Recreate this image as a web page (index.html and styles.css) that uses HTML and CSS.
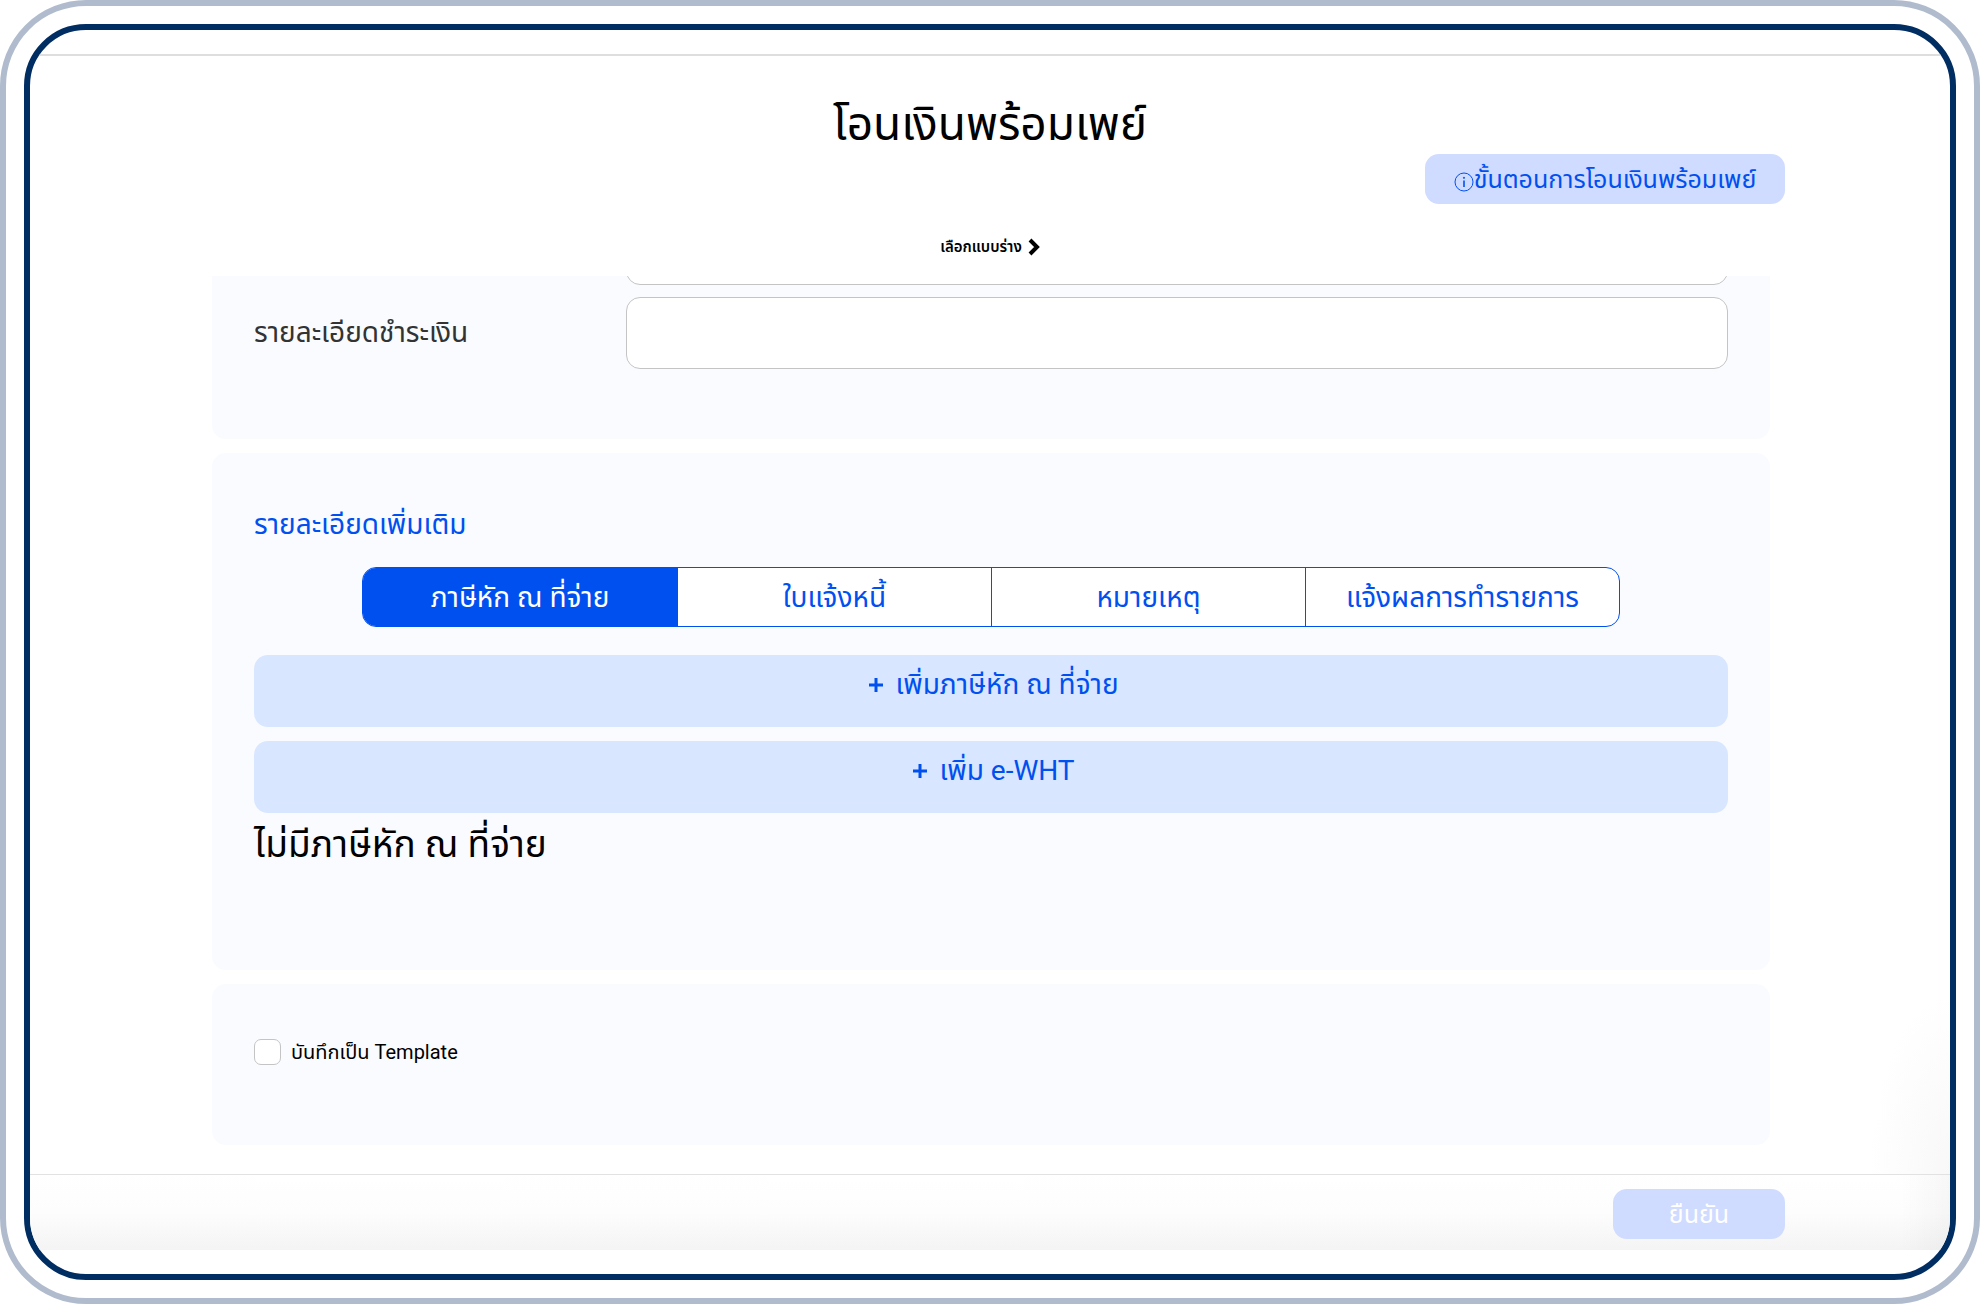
FILE: index.html
```html
<!DOCTYPE html>
<html lang="th">
<head>
	<meta charset="UTF-8">
	<title>โอนเงินพร้อมเพย์</title>
	<link rel="stylesheet" href="styles.css">
</head>

<body>
	<div class="frame">
		<div class="screen">
			<header class="header">
				<h1>โอนเงินพร้อมเพย์</h1>
				<div class="help-row">
					<button type="button" class="btn help">
						<svg class="icon-info" viewBox="0 0 20 20" fill="none" stroke="currentColor">
							<circle cx="10" cy="10" r="9" />
							<path d="M10 8.5v6.5" stroke-width="1.6" />
							<circle cx="10" cy="5.8" r=".6" fill="currentColor" />
						</svg>ขั้นตอนการโอนเงินพร้อมเพย์
					</button>
				</div>
				<button type="button" class="draft">
					เลือกแบบร่าง
					<svg class="icon-chevron" viewBox="0 0 12 18" fill="none" stroke="currentColor" stroke-width="4">
						<path d="M2 2l7 7-7 7" />
					</svg>
				</button>
			</header>

			<main class="content">
				<section class="card">
					<div class="field">
						<span></span>
						<input type="text" class="input" aria-label="หมายเลข">
					</div>
					<div class="field">
						<label for="detail">รายละเอียดชำระเงิน</label>
						<input type="text" class="input" id="detail">
					</div>
				</section>

				<section class="card more">
					<h2>รายละเอียดเพิ่มเติม</h2>
					<div class="tabs">
						<button type="button" class="tab active">ภาษีหัก ณ ที่จ่าย</button>
						<button type="button" class="tab">ใบแจ้งหนี้</button>
						<button type="button" class="tab">หมายเหตุ</button>
						<button type="button" class="tab">แจ้งผลการทำรายการ</button>
					</div>
					<button type="button" class="add">
						<svg class="icon-plus" viewBox="0 0 14 14" stroke="currentColor" stroke-width="3"><path d="M7 0v14M0 7h14" /></svg>
						เพิ่มภาษีหัก ณ ที่จ่าย
					</button>
					<button type="button" class="add">
						<svg class="icon-plus" viewBox="0 0 14 14" stroke="currentColor" stroke-width="3"><path d="M7 0v14M0 7h14" /></svg>
						เพิ่ม e-WHT
					</button>
					<p class="empty">ไม่มีภาษีหัก ณ ที่จ่าย</p>
				</section>

				<section class="card save">
					<input type="checkbox" class="checkbox" id="template">
					<label for="template">บันทึกเป็น Template</label>
				</section>
			</main>

			<footer class="footer">
				<button type="button" class="btn confirm">ยืนยัน</button>
			</footer>
		</div>
	</div>
</body>

</html>
```
FILE: styles.css
```css
* {
	box-sizing: border-box;
}
body {
	margin: 0;
	background: #fff;
	font-family: "Roboto", "Noto Sans Thai", "Liberation Sans", sans-serif;
	color: #000;
}
h1, h2, p {
	margin: 0;
	font-weight: 400;
}
button {
	padding: 0;
	border: 0;
	font: inherit;
	cursor: pointer;
}

/*外框*/
.frame {
	height: 100vh;
	padding: 18px;
	border: 6px solid #b0bccd;
	border-radius: 86px;
}
.screen {
	display: flex;
	flex-direction: column;
	height: 100%;
	padding: 24px 0;
	overflow: hidden;
	border: 6px solid #002d62;
	border-radius: 62px;
}

/*header*/
.header {
	display: flex;
	flex-direction: column;
	height: 222px;
	padding-top: 38px;
	border-top: 2px solid #dedede;
}
h1 {
	font-size: 46px;
	line-height: 60px;
	text-align: center;
}
.help-row {
	display: flex;
	justify-content: flex-end;
	padding-right: 165px;
}
.btn {
	height: 50px;
	border-radius: 14px;
	background: #cfdbff;
	font-size: 25px;
	line-height: 32px;
}
.help {
	display: flex;
	align-items: center;
	justify-content: center;
	width: 360px;
	padding-top: 2px;
	color: #0050f0;
}
.icon-info {
	width: 20px;
	height: 20px;
	margin-top: 4px;
}
.draft {
	display: flex;
	align-items: center;
	align-self: center;
	gap: 6px;
	margin-top: 31px;
	background: none;
	font-size: 15px;
	line-height: 24px;
	font-weight: 600;
}
.icon-chevron {
	width: 12px;
	height: 18px;
}

/*cards*/
.content {
	display: flex;
	flex: 1;
	flex-direction: column;
	justify-content: flex-end;
	gap: 14px;
	min-height: 0;
	padding: 0 180px 29px 182px;
	overflow: hidden;
	/*右下角的阴影*/
	background: radial-gradient(80px 180px at 100% 100%, #f8f8f8, #fff);
}
.card {
	flex: none;
	padding: 42px;
	border-radius: 14px;
	background: #f9fbff;
}
.card:first-child {
	padding-bottom: 70px;
}
.field {
	display: flex;
	align-items: center;
	font-size: 28px;
	color: #333;
}
.field + .field {
	margin-top: 12px;
}
.field > :first-child {
	flex: 0 0 372px;
}
.input {
	flex: 1;
	height: 72px;
	padding: 0 20px;
	border: 1px solid #c4c4c4;
	border-radius: 14px;
	background: #fff;
	font: inherit;
}
.more {
	padding: 52px 42px 107px;
}
h2 {
	font-size: 28px;
	line-height: 40px;
	color: #0050f0;
}
.tabs {
	display: grid;
	grid-template-columns: repeat(4, 1fr);
	margin: 22px 108px 28px;
	overflow: hidden;
	border: 1px solid #0050f0;
	border-radius: 14px;
	background: #fff;
}
.tab {
	height: 58px;
	padding-top: 2px;
	background: none;
	color: #0050f0;
	font-size: 28px;
}
.tab + .tab {
	border-left: 1px solid #0050f0;
}
.active {
	background: #0050f0;
	color: #fff;
}
.add {
	display: flex;
	justify-content: center;
	align-items: center;
	gap: 12px;
	width: 100%;
	height: 72px;
	margin-bottom: 14px;
	padding: 0 0 12px 6px;
	border-radius: 14px;
	background: #d8e6ff;
	color: #0050f0;
	font-size: 28px;
}
.icon-plus {
	width: 14px;
	height: 14px;
}
.empty {
	font-size: 37px;
	line-height: 36px;
}
.save {
	display: flex;
	align-items: center;
	gap: 10px;
	padding: 52px 42px 77px;
	font-size: 20px;
	line-height: 32px;
}
.checkbox {
	appearance: none;
	width: 27px;
	height: 26px;
	margin: 0;
	border: 1px solid #c4c4c4;
	border-radius: 7px;
	background: #fff;
}

/*footer*/
.footer {
	display: flex;
	justify-content: flex-end;
	height: 76px;
	padding: 14px 165px 0 0;
	border-top: 1px solid #e2e2e2;
	background:
		linear-gradient(to left, rgba(0, 0, 0, 0.03), transparent 50px),
		linear-gradient(#fff, #fdfdfd 50%, #f4f4f4);
}
.confirm {
	width: 172px;
	padding-top: 2px;
	color: #fff;
}
```
